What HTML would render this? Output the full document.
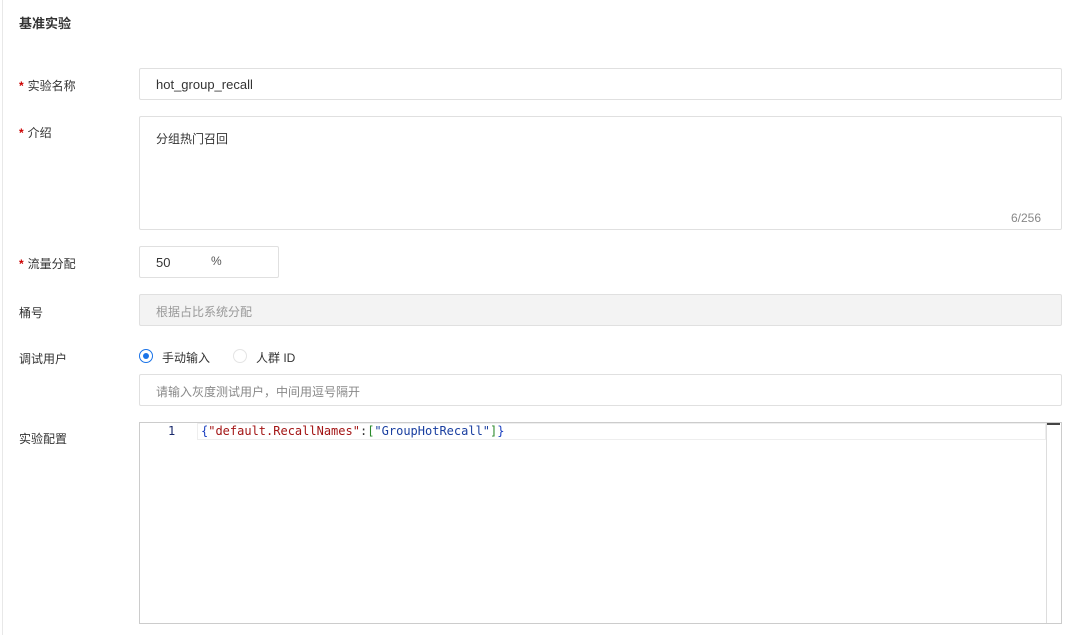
<!DOCTYPE html>
<html><head><meta charset="utf-8"><style>
*{box-sizing:border-box;margin:0;padding:0}
body{width:1069px;height:635px;background:#fff;font-family:"Liberation Sans","Noto Sans CJK SC",sans-serif;font-size:12px;color:#333;position:relative;overflow:hidden}
.lb{position:absolute;left:2px;top:0;bottom:0;width:1px;background:#e8e8e8}
.t{position:absolute;left:19px;top:13px;font-size:13px;font-weight:bold;color:#333}
.l{position:absolute;left:19px;font-size:12px;color:#333}
.l b{color:#c00;font-weight:bold;margin-right:4px}
.box{position:absolute;border:1px solid #e0e0e0;border-radius:2px;background:#fff}
.txt{position:absolute;font-size:12px}
.rad{position:absolute;width:14px;height:14px;border-radius:50%;border:1px solid #ddd;background:#fff}
.mono{font-family:"DejaVu Sans Mono","Liberation Mono",monospace;font-size:12px}
</style></head><body>
<div class="lb"></div>
<div class="t">基准实验</div>

<div class="l" style="top:77px"><b>*</b>实验名称</div>
<div class="box" style="left:139px;top:68px;width:923px;height:32px"></div>
<div class="txt" style="left:156px;top:77px;color:#333;font-size:13px">hot_group_recall</div>

<div class="l" style="top:124px"><b>*</b>介绍</div>
<div class="box" style="left:139px;top:116px;width:923px;height:114px"></div>
<div class="txt" style="left:156px;top:130px">分组热门召回</div>
<div class="txt" style="left:1011px;top:211px;color:#888">6/256</div>

<div class="l" style="top:255px"><b>*</b>流量分配</div>
<div class="box" style="left:139px;top:246px;width:140px;height:32px"></div>
<div class="txt" style="left:156px;top:255px;font-size:13px">50</div>
<div class="txt" style="left:211px;top:254px;color:#555">%</div>

<div class="l" style="top:304px">桶号</div>
<div class="box" style="left:139px;top:294px;width:923px;height:32px;background:#f3f3f3"></div>
<div class="txt" style="left:156px;top:303px;color:#999">根据占比系统分配</div>

<div class="l" style="top:350px">调试用户</div>
<div class="rad" style="left:139px;top:349px;border:1px solid #1a73e8"><div style="position:absolute;left:3px;top:3px;width:6px;height:6px;border-radius:50%;background:#1a73e8"></div></div>
<div class="txt" style="left:162px;top:349px">手动输入</div>
<div class="rad" style="left:233px;top:349px;border-color:#e4e4e4"></div>
<div class="txt" style="left:256px;top:349px">人群 ID</div>
<div class="box" style="left:139px;top:374px;width:923px;height:32px"></div>
<div class="txt" style="left:156px;top:383px;color:#888">请输入灰度测试用户，中间用逗号隔开</div>

<div class="l" style="top:430px">实验配置</div>
<div class="box" style="left:139px;top:422px;width:923px;height:202px;border-color:#ccc;border-radius:0"></div>
<div style="position:absolute;left:197px;top:423px;width:849px;height:17px;border:1px solid #eee"></div>
<div style="position:absolute;left:1046px;top:423px;width:1px;height:200px;background:#ddd"></div>
<div style="position:absolute;left:1047px;top:423px;width:13px;height:2px;background:#444"></div>
<div class="mono" style="position:absolute;left:168px;top:424px;color:#1a2a6c">1</div>
<div class="mono" style="position:absolute;left:201px;top:424px;white-space:pre"><span style="color:#1a3fc0">{</span><span style="color:#a31515">"default.RecallNames"</span><span style="color:#333">:</span><span style="color:#2a8a2a">[</span><span style="color:#1a3fa0">"GroupHotRecall"</span><span style="color:#2a8a2a">]</span><span style="color:#1a3fc0">}</span></div>
</body></html>
